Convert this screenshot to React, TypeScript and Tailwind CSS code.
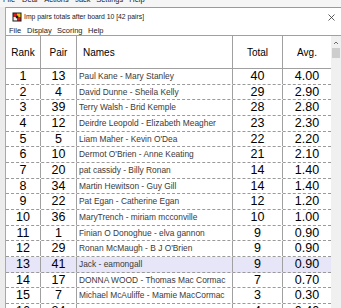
import React from 'react';

const rows = [
  { rank: 1, pair: 13, names: 'Paul Kane - Mary Stanley', total: 40, avg: '4.00' },
  { rank: 2, pair: 4, names: 'David Dunne - Sheila Kelly', total: 29, avg: '2.90' },
  { rank: 3, pair: 39, names: 'Terry Walsh - Brid Kemple', total: 28, avg: '2.80' },
  { rank: 4, pair: 12, names: 'Deirdre Leopold - Elizabeth Meagher', total: 23, avg: '2.30' },
  { rank: 5, pair: 5, names: "Liam Maher - Kevin O'Dea", total: 22, avg: '2.20' },
  { rank: 6, pair: 10, names: "Dermot O'Brien - Anne Keating", total: 21, avg: '2.10' },
  { rank: 7, pair: 20, names: 'pat cassidy - Billy Ronan', total: 14, avg: '1.40' },
  { rank: 8, pair: 34, names: 'Martin Hewitson - Guy Gill', total: 14, avg: '1.40' },
  { rank: 9, pair: 22, names: 'Pat Egan - Catherine Egan', total: 12, avg: '1.20' },
  { rank: 10, pair: 36, names: 'MaryTrench - miriam mcconville', total: 10, avg: '1.00' },
  { rank: 11, pair: 1, names: 'Finian O Donoghue - elva gannon', total: 9, avg: '0.90' },
  { rank: 12, pair: 29, names: "Ronan McMaugh - B J O'Brien", total: 9, avg: '0.90' },
  { rank: 13, pair: 41, names: 'Jack - eamongall', total: 9, avg: '0.90', selected: true },
  { rank: 14, pair: 17, names: 'DONNA WOOD - Thomas Mac Cormac', total: 7, avg: '0.70' },
  { rank: 15, pair: 7, names: 'Michael McAuliffe - Mamie MacCormac', total: 3, avg: '0.30' },
  { rank: 16, pair: 24, names: 'Seamus Ryan - Joan Ryan', total: 4, avg: '0.40' },
];

const cols = 'grid grid-cols-[35px_36px_156px_50px_48px]';

function AppIcon() {
  return (
    <svg width="10" height="10" viewBox="0 0 10 10">
      <rect x="0.5" y="0.5" width="9" height="9" fill="#1a1a1a" />
      <rect x="1.5" y="1.5" width="3.5" height="3.5" fill="#d42020" />
      <rect x="5" y="1.5" width="3.5" height="3.5" fill="#f2c200" />
      <rect x="1.5" y="5" width="3.5" height="3.5" fill="#f2f2f2" />
      <rect x="5" y="5" width="3.5" height="3.5" fill="#d42020" />
      <circle cx="5" cy="5" r="1.4" fill="#1a1a1a" />
    </svg>
  );
}

export default function App() {
  return (
    <div className="w-[341px] h-[308px] overflow-hidden bg-[#f0f0f0] font-['Liberation_Sans',Arial,sans-serif] text-black">
      {/* parent window menu, mostly scrolled off */}
      <div className="h-[7px] overflow-hidden bg-[#f5f5f5]">
        <div className="flex pl-[3px] -mt-[5px] text-[7.5px] leading-[10px] text-[#222]">
          <span className="mr-[7px]">File</span>
          <span className="mr-[6.6px]">Deal</span>
          <span className="mr-[6.4px]">Actions</span>
          <span className="mr-[5.6px]">Jack</span>
          <span className="mr-[6px]">Settings</span>
          <span>Help</span>
        </div>
      </div>

      <div className="flex h-[301px]">
        <div className="w-[6px] shrink-0 bg-[#ececec] border-r border-[#a8a8a8]" />

        <div className="flex-1 flex flex-col bg-white border-t border-[#9a9a9a] overflow-hidden">
          {/* title bar */}
          <div className="h-[18px] shrink-0 flex items-center pl-[6px] pr-[6px]">
            <AppIcon />
            <span className="ml-[2px] text-[6.8px] text-[#222]">Imp pairs totals after board 10 [42 pairs]</span>
            <svg className="ml-auto" width="7" height="7" viewBox="0 0 7 7">
              <path d="M0.5 0.5 L6.5 6.5 M6.5 0.5 L0.5 6.5" stroke="#333" strokeWidth="0.8" />
            </svg>
          </div>

          {/* menu bar */}
          <div className="h-[9px] shrink-0 flex items-center pl-[3px] text-[7.5px] text-[#222]">
            <span className="mr-[6px]">File</span>
            <span className="mr-[5.4px]">Display</span>
            <span className="mr-[5.6px]">Scoring</span>
            <span>Help</span>
          </div>

          {/* table + scrollbar */}
          <div className="flex flex-1 min-h-0 border-t border-[#a0a0a0]">
            <div className="flex-1 flex flex-col">
              <div className={`${cols} h-[33px] shrink-0 border-b border-[#a0a0a0] text-[10px]`}>
                <div className="flex items-center justify-center border-r border-[#a0a0a0]">Rank</div>
                <div className="flex items-center justify-center border-r border-[#a0a0a0]">Pair</div>
                <div className="flex items-center pl-[6px] border-r border-[#a0a0a0]">Names</div>
                <div className="flex items-center justify-center border-r border-[#a0a0a0]">Total</div>
                <div className="flex items-center justify-center">Avg.</div>
              </div>

              {rows.map((r) => (
                <div
                  key={r.rank}
                  className={`${cols} h-[15.67px] shrink-0 border-b border-dashed border-[#9a9a9a] ${r.selected ? 'bg-[#e6e6f8]' : ''}`}
                >
                  <div className="flex items-center justify-center border-r border-solid border-[#a0a0a0] text-[12.5px] leading-none">{r.rank}</div>
                  <div className="flex items-center justify-center border-r border-solid border-[#a0a0a0] text-[12.5px] leading-none">{r.pair}</div>
                  <div className="flex items-center pl-[2px] border-r border-solid border-[#a0a0a0] text-[8.4px] text-[#3a3a3a] whitespace-nowrap overflow-hidden">{r.names}</div>
                  <div className="flex items-center justify-center border-r border-solid border-[#a0a0a0] text-[12.5px] leading-none">{r.total}</div>
                  <div className="flex items-center justify-center text-[12.5px] leading-none">{r.avg}</div>
                </div>
              ))}
            </div>

            {/* scrollbar */}
            <div className="w-[10px] shrink-0 bg-[#f0f0f0] flex flex-col items-center">
              <svg className="mt-[5px]" width="6" height="4" viewBox="0 0 6 4">
                <path d="M1 3 L3 1 L5 3" stroke="#606060" strokeWidth="0.9" fill="none" />
              </svg>
              <div className="mt-[3px] w-[8px] h-[10px] bg-[#cdcdcd]" />
            </div>
          </div>
        </div>
      </div>
    </div>
  );
}
